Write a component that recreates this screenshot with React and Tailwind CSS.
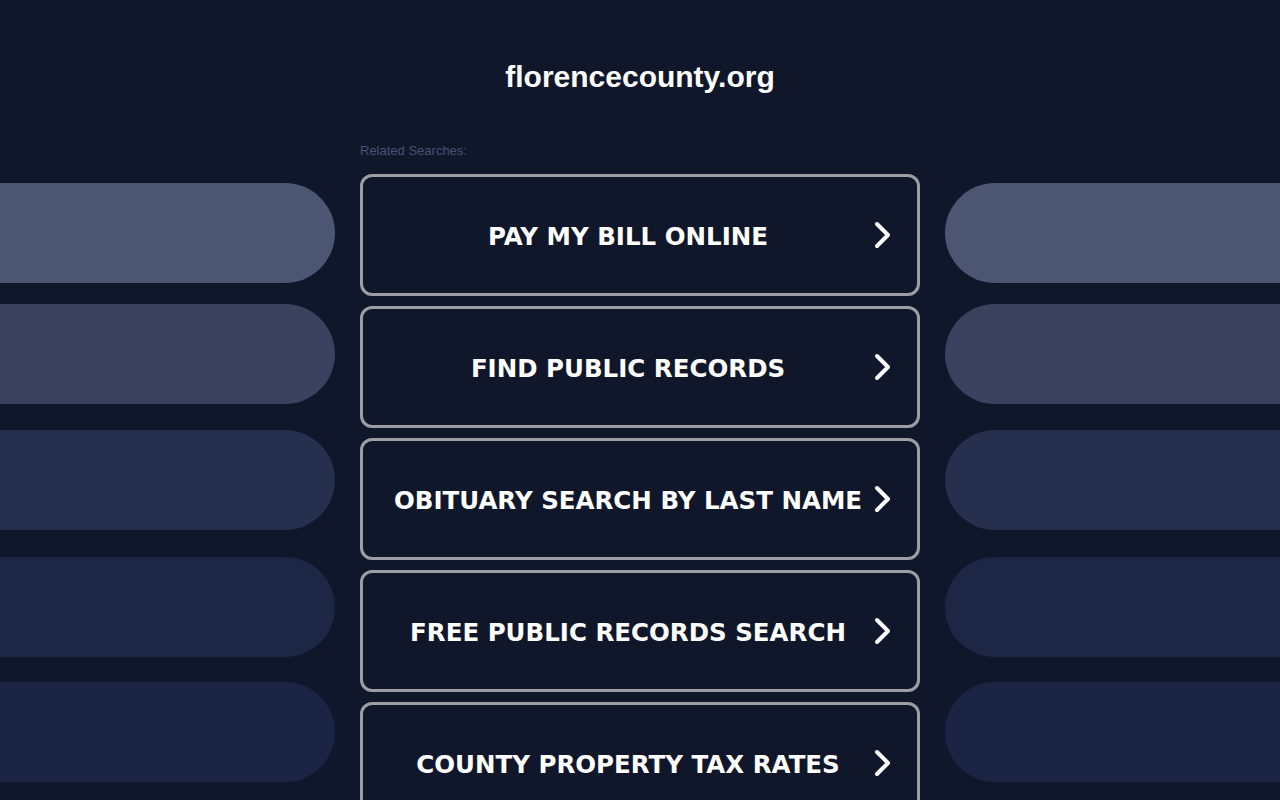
import React from 'react';

const searches = [
    'PAY MY BILL ONLINE',
    'FIND PUBLIC RECORDS',
    'OBITUARY SEARCH BY LAST NAME',
    'FREE PUBLIC RECORDS SEARCH',
    'COUNTY PROPERTY TAX RATES',
];

// side decoration pills, top to bottom
const pills = [
    { color: 'bg-[#4c5673]', gap: 'mt-0' },
    { color: 'bg-[#3a4260]', gap: 'mt-[21px]' },
    { color: 'bg-[#272f4e]', gap: 'mt-[26px]' },
    { color: 'bg-[#1e2646]', gap: 'mt-[27px]' },
    { color: 'bg-[#1c2446]', gap: 'mt-[25px]' },
];

const Chevron = () => (
    <svg width="24" height="30" viewBox="0 0 24 30" fill="none" className="shrink-0">
        <path d="M4 4 L15 15 L4 26" stroke="#ffffff" strokeWidth="4" strokeLinecap="round" strokeLinejoin="round" />
    </svg>
);

const SideColumn = ({ side }) => (
    <div className="w-[335px] shrink-0 pt-[183px] flex flex-col">
        {pills.map((p, i) => (
            <div
                key={i}
                className={`h-[100px] ${p.color} ${p.gap} ${side === 'left' ? 'rounded-r-[50px]' : 'rounded-l-[50px]'}`}
            />
        ))}
    </div>
);

export default function App() {
    return (
        <div className="w-full h-[800px] overflow-hidden bg-[#11172b] flex justify-between">
            <SideColumn side="left" />

            {/* Center */}
            <div className="w-[560px] shrink-0 flex flex-col">
                <h1 className="pt-[59px] text-center text-[30px] leading-[36px] font-bold text-white font-['Liberation_Sans',Arial,sans-serif]">
                    florencecounty.org
                </h1>
                <p className="mt-[48px] text-[13px] leading-[16px] text-[#4b5176] font-['Liberation_Sans',Arial,sans-serif]">
                    Related Searches:
                </p>
                <div className="mt-[15px] flex flex-col gap-[10px]">
                    {searches.map((s) => (
                        <a
                            key={s}
                            href="#"
                            className="h-[122px] shrink-0 flex items-center px-[20px] border-[3px] border-[#9d9ea4] rounded-[12px] bg-[#11172b]"
                        >
                            <span className="flex-1 pt-[3px] text-center text-white font-bold text-[24.5px] leading-[30px] font-['DejaVu_Sans',Verdana,sans-serif] whitespace-nowrap">
                                {s}
                            </span>
                            <Chevron />
                        </a>
                    ))}
                </div>
            </div>

            <SideColumn side="right" />
        </div>
    );
}
